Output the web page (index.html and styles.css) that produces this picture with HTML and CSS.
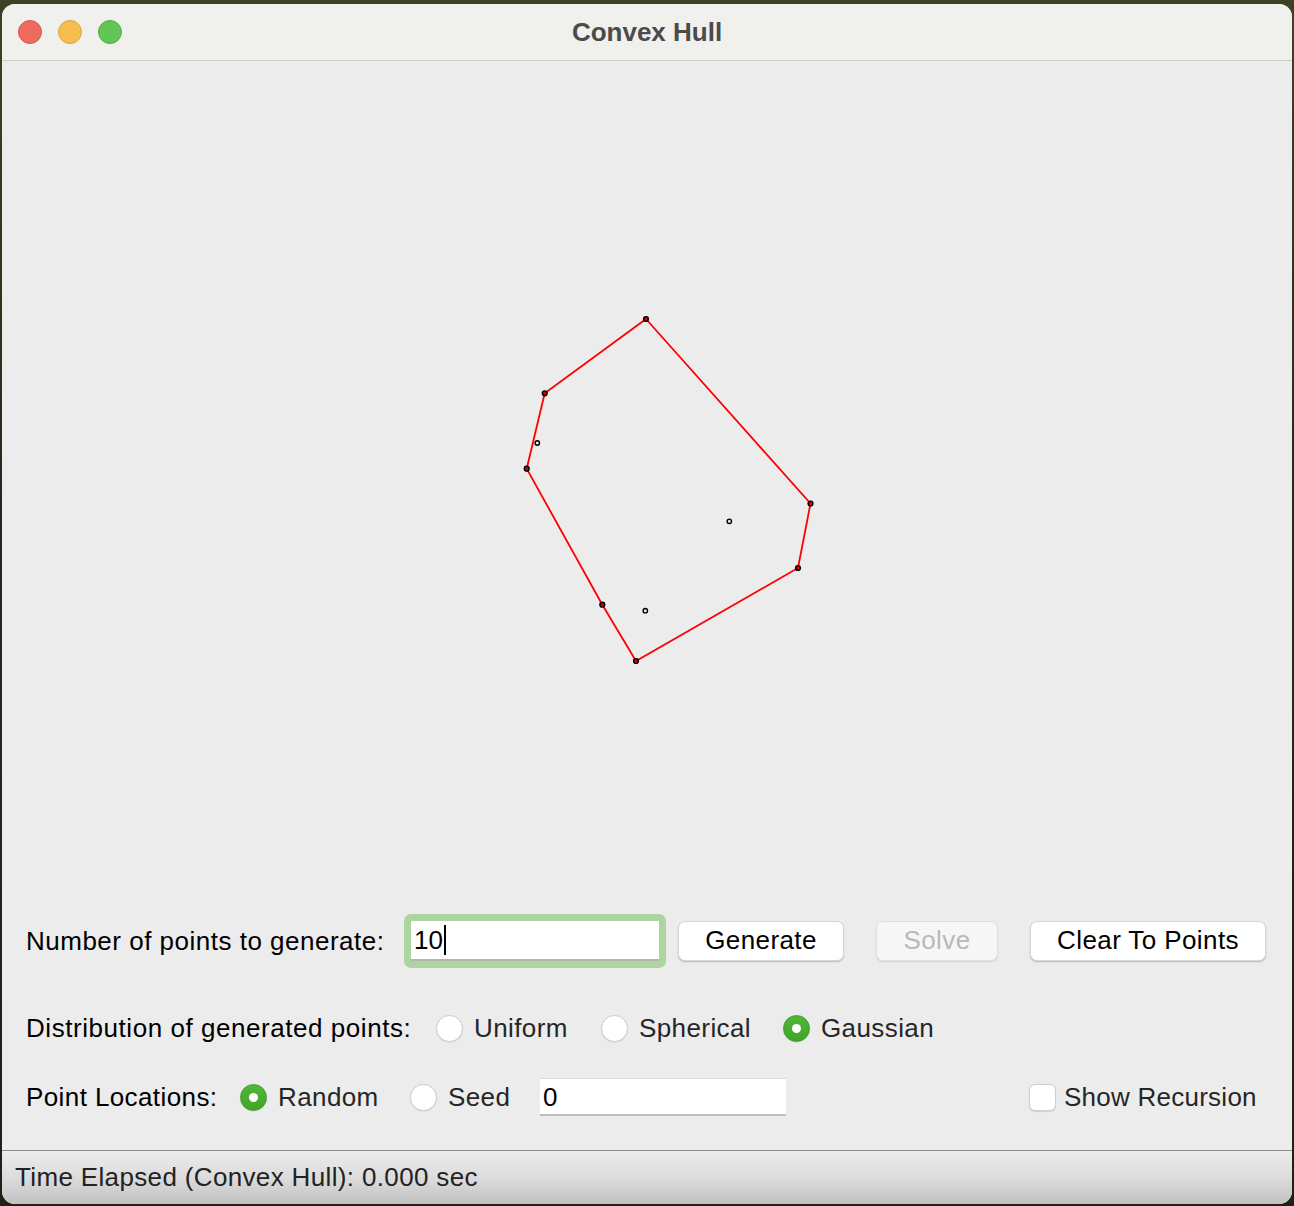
FILE: index.html
```html
<!DOCTYPE html>
<html>
<head>
<meta charset="utf-8">
<link rel="stylesheet" href="styles.css">
</head>
<body>
<div class="window">
  <div class="titlebar">
    <div class="lights">
      <span class="light red"></span>
      <span class="light yellow"></span>
      <span class="light green"></span>
    </div>
    <div class="title">Convex Hull</div>
  </div>
  <div class="canvas">
    <svg width="1290" height="839" viewBox="2 61 1290 839">
      <polygon class="hull" points="646,319 810.5,503.5 798,568 636,661 602.3,604.7 526.7,468.7 544.7,393.3"/>
      <g class="pt on">
        <circle cx="646" cy="319" r="2.4"/>
        <circle cx="810.5" cy="503.5" r="2.4"/>
        <circle cx="798" cy="568" r="2.4"/>
        <circle cx="636" cy="661" r="2.4"/>
        <circle cx="602.3" cy="604.7" r="2.4"/>
        <circle cx="526.7" cy="468.7" r="2.4"/>
        <circle cx="544.7" cy="393.3" r="2.4"/>
      </g>
      <g class="pt off">
        <circle cx="537.3" cy="443" r="2.2"/>
        <circle cx="729.3" cy="521.3" r="2.2"/>
        <circle cx="645.3" cy="610.7" r="2.2"/>
      </g>
    </svg>
  </div>
  <div class="controls">
    <div class="row row1">
      <div class="label lab1">Number of points to generate:</div>
      <div class="focusring"><div class="field">10<span class="caret"></span></div></div>
      <div class="btn gen">Generate</div>
      <div class="btn solve disabled">Solve</div>
      <div class="btn clear">Clear To Points</div>
    </div>
    <div class="row row2">
      <div class="label lab2">Distribution of generated points:</div>
      <div class="opt w-uniform"><span class="radio"></span><span class="optlabel">Uniform</span></div>
      <div class="opt w-spherical"><span class="radio"></span><span class="optlabel">Spherical</span></div>
      <div class="opt"><span class="radio checked"></span><span class="optlabel">Gaussian</span></div>
    </div>
    <div class="row row3">
      <div class="label lab3">Point Locations:</div>
      <div class="opt w-random"><span class="radio checked"></span><span class="optlabel">Random</span></div>
      <div class="opt w-seed"><span class="radio"></span><span class="optlabel">Seed</span></div>
      <div class="seedfield">0</div>
      <div class="opt check"><span class="checkbox"></span><span class="optlabel">Show Recursion</span></div>
    </div>
  </div>
  <div class="status">Time Elapsed (Convex Hull): 0.000 sec</div>
</div>
</body>
</html>
```
FILE: styles.css
```css
html, body {
  margin: 0;
  padding: 0;
}
body {
  width: 1294px;
  height: 1206px;
  background: linear-gradient(180deg, #3d4226 0%, #262a1c 40%, #1d2116 100%);
  overflow: hidden;
  font-family: "Liberation Sans", Arial, sans-serif;
}
.window {
  margin: 4px 0 0 2px;
  width: 1290px;
  height: 1200px;
  border-radius: 13px;
  overflow: hidden;
  background: #ececec;
  display: flex;
  flex-direction: column;
}
.titlebar {
  height: 56px;
  flex: none;
  background: #f0f0ed;
  border-bottom: 1px solid #cdcdcb;
  display: flex;
  align-items: center;
  justify-content: center;
  position: relative;
}
.lights {
  position: absolute;
  left: 16px;
  top: 16px;
  display: flex;
  gap: 16px;
}
.light {
  width: 24px;
  height: 24px;
  border-radius: 50%;
  box-sizing: border-box;
}
.red { background: #ee6b60; border: 1px solid #d9574d; }
.yellow { background: #f6be4f; border: 1px solid #dea43a; }
.green { background: #62c554; border: 1px solid #4fae42; }
.title {
  font-size: 26px;
  font-weight: bold;
  color: #4b4b4b;
  margin-top: 0;
}
.canvas {
  height: 839px;
  flex: none;
}
.canvas svg {
  display: block;
}
.hull {
  fill: none;
  stroke: #ff0000;
  stroke-width: 1.8;
}
.pt circle {
  stroke: #000;
  stroke-width: 1.4;
}
.pt.on circle { fill: #d40000; }
.pt.off circle { fill: #ececec; }

.controls {
  flex: none;
  height: 250px;
  box-sizing: border-box;
  padding: 14px 0 0 24px;
  font-size: 26px;
  letter-spacing: 0.4px;
}
.row {
  display: flex;
  align-items: center;
}
.row1 { height: 54px; }
.row2 { height: 30px; margin-top: 45px; }
.row3 { height: 40px; margin-top: 34px; }
.label {
  color: #000;
  flex: none;
}
.lab1 { width: 378px; letter-spacing: 0.5px; }
.lab2 { width: 410px; letter-spacing: 0.55px; }
.lab3 { width: 214px; }
.focusring {
  width: 262px;
  height: 54px;
  box-sizing: border-box;
  border-radius: 7px;
  background: #acd5a1;
  padding: 7px;
  flex: none;
}
.field {
  height: 40px;
  background: #fff;
  box-sizing: border-box;
  border-bottom: 2px solid #b4b4b4;
  padding-left: 3px;
  color: #000;
  line-height: 40px;
  display: flex;
  align-items: center;
  letter-spacing: 0;
}
.caret {
  display: inline-block;
  width: 2px;
  height: 30px;
  background: #000;
  margin-left: 1px;
}
.btn {
  height: 40px;
  box-sizing: border-box;
  background: #fff;
  border-radius: 7px;
  border: 1px solid #d6d6d6;
  box-shadow: 0 1px 1.5px rgba(0,0,0,0.22);
  display: flex;
  align-items: center;
  justify-content: center;
  color: #000;
  flex: none;
  padding-bottom: 1px;
}
.gen { width: 166px; margin-left: 12px; }
.solve { width: 122px; margin-left: 32px; }
.clear { width: 236px; margin-left: 32px; }
.disabled {
  background: #f6f6f6;
  color: #b9b9b9;
  border-color: #e0e0e0;
  box-shadow: 0 1px 1.5px rgba(0,0,0,0.1);
}
.opt {
  display: flex;
  align-items: center;
  flex: none;
  color: #262626;
}
.w-uniform { width: 165px; }
.w-spherical { width: 182px; }
.w-random { width: 170px; }
.w-seed { width: 130px; }
.radio {
  width: 27px;
  height: 27px;
  border-radius: 50%;
  box-sizing: border-box;
  background: #fff;
  border: 1px solid #cfcfcf;
  box-shadow: 0 0.5px 1px rgba(0,0,0,0.12);
  margin-right: 11px;
  flex: none;
  position: relative;
}
.radio.checked {
  background: linear-gradient(180deg, #52b63a 0%, #3fa526 100%);
  border: 1px solid #3c9c24;
}
.radio.checked::after {
  content: "";
  position: absolute;
  left: 8px;
  top: 8px;
  width: 9px;
  height: 9px;
  border-radius: 50%;
  background: #fff;
}
.seedfield {
  width: 246px;
  height: 38px;
  box-sizing: border-box;
  background: #fff;
  border-top: 1px solid #dcdcdc;
  border-bottom: 2px solid #bdbdbd;
  padding-left: 3px;
  line-height: 36px;
  color: #000;
  flex: none;
  letter-spacing: 0;
}
.check { margin-left: 243px; letter-spacing: 0.25px; }
.checkbox {
  width: 27px;
  height: 27px;
  box-sizing: border-box;
  border-radius: 6px;
  background: #fff;
  border: 1px solid #cfcfcf;
  box-shadow: 0 0.5px 1px rgba(0,0,0,0.12);
  margin-right: 8px;
  flex: none;
}
.status {
  flex: 1;
  border-top: 1px solid #8c8c8c;
  background: linear-gradient(180deg, #ececec 0%, #dcdcdc 50%, #c2c2c2 100%);
  font-size: 26px;
  letter-spacing: 0.35px;
  color: #222;
  padding-left: 13px;
  display: flex;
  align-items: center;
  padding-bottom: 1px;
}
```
